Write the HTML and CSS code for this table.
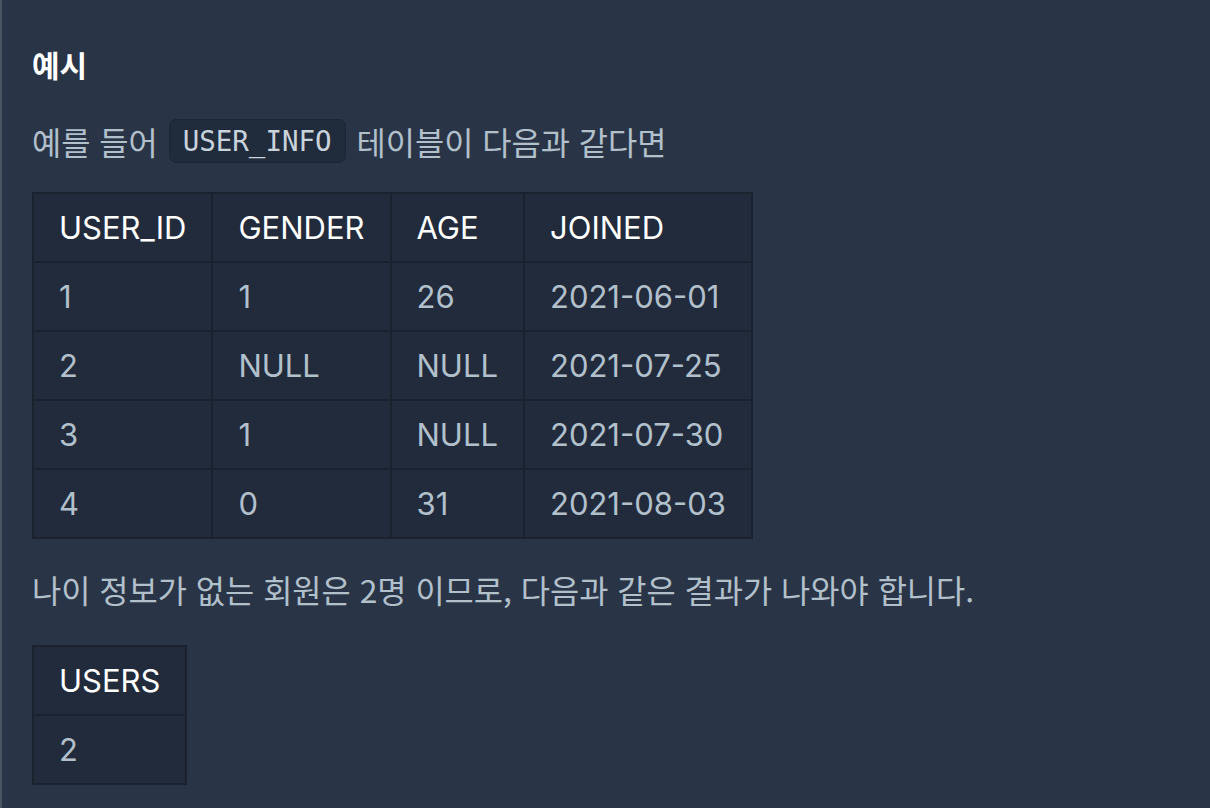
FILE: index.html
```html
<!DOCTYPE html>
<html lang="ko">
<head>
<meta charset="utf-8">
<title>예시</title>
<link rel="stylesheet" href="styles.css">
</head>
<body>
<main class="guide">
  <h5 class="title">예시</h5>
  <p class="text">예를 들어 <code class="code">USER_INFO</code> 테이블이 다음과 같다면</p>
  <table class="data">
    <thead>
      <tr><th>USER_ID</th><th>GENDER</th><th>AGE</th><th>JOINED</th></tr>
    </thead>
    <tbody>
      <tr><td>1</td><td>1</td><td>26</td><td>2021-06-01</td></tr>
      <tr><td>2</td><td>NULL</td><td>NULL</td><td>2021-07-25</td></tr>
      <tr><td>3</td><td>1</td><td>NULL</td><td>2021-07-30</td></tr>
      <tr><td>4</td><td>0</td><td>31</td><td>2021-08-03</td></tr>
    </tbody>
  </table>
  <p class="text">나이 정보가 없는 회원은 2명 이므로, 다음과 같은 결과가 나와야 합니다.</p>
  <table class="data result">
    <thead>
      <tr><th>USERS</th></tr>
    </thead>
    <tbody>
      <tr><td>2</td></tr>
    </tbody>
  </table>
</main>
</body>
</html>
```
FILE: styles.css
```css
html, body {
  margin: 0;
  padding: 0;
  background: #293546;
}
body {
  width: 1210px;
  height: 808px;
  overflow: hidden;
}
.guide {
  box-sizing: border-box;
  height: 808px;
  border-left: 2px solid #4a5361;
  padding: 44px 30px 0 30px;
  font-family: "Noto Sans CJK KR", "Noto Sans", sans-serif;
  color: #b2c0cc;
}
.title {
  margin: 0 0 35px 0;
  font-size: 30px;
  line-height: 40px;
  font-weight: 700;
  color: #ffffff;
}
.text {
  margin: 0;
  font-size: 31.75px;
  line-height: 44px;
}
.code {
  display: inline-block;
  box-sizing: border-box;
  height: 44px;
  line-height: 42px;
  padding: 0 13px;
  border: 1px solid #1d2636;
  border-radius: 7px;
  background: #202b3c;
  color: #c9d3dc;
  font-family: "DejaVu Sans Mono", monospace;
  font-size: 27.5px;
  vertical-align: top;
  margin: 0 2px;
}
.data {
  border-collapse: collapse;
  border: 2px solid #1a2230;
  background: #212b3c;
  margin: 29px 0 28px 0;
  font-family: Inter, "Noto Sans", sans-serif;
  font-size: 31px;
}
.data.result {
  margin-top: 34px;
}
.data th, .data td {
  border: 2px solid #1a2230;
  padding: 0 25px;
  height: 67px;
  text-align: left;
  font-weight: 400;
  white-space: nowrap;
}
.data th {
  color: #ffffff;
}
.data td {
  color: #b2c0cc;
}
```
